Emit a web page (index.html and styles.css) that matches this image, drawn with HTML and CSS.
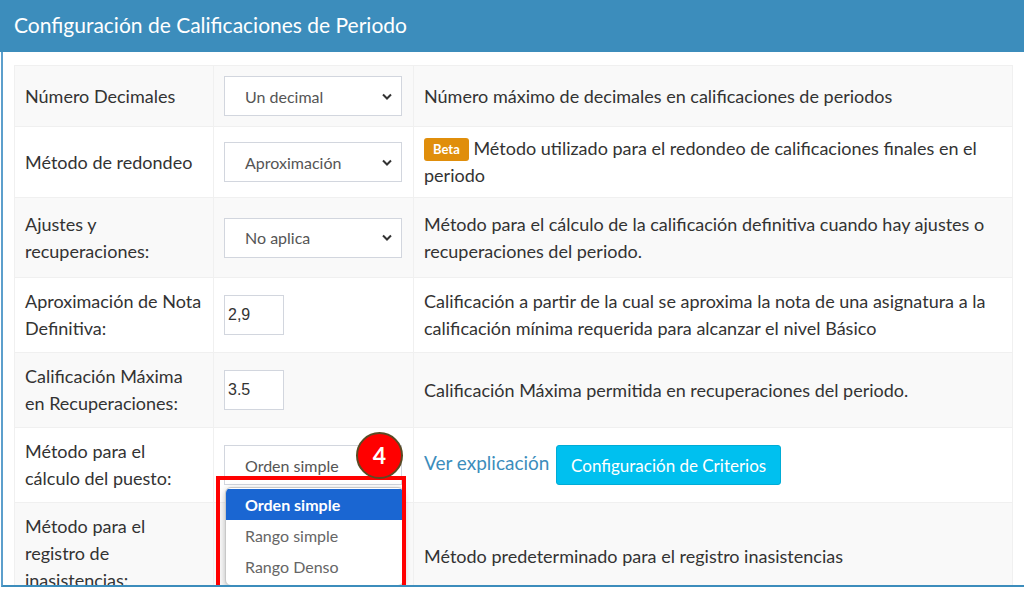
FILE: index.html
```html
<!DOCTYPE html>
<html lang="es">
<head>
  <meta charset="UTF-8">
  <title>Configuración de Calificaciones de Periodo</title>
  <link rel="stylesheet" href="styles.css">
</head>
<body>
  <div class="panel">
    <div class="panel-heading">Configuración de Calificaciones de Periodo</div>
    <div class="panel-body">
      <table class="config-table">
        <colgroup>
          <col class="col-label">
          <col class="col-field">
          <col class="col-desc">
        </colgroup>
        <tbody>
          <tr class="row-decimales">
            <td>Número Decimales</td>
            <td>
              <div class="fake-select">
                <span>Un decimal</span>
                <svg class="chevron" width="10" height="7" viewBox="0 0 10 7"><path d="M1 1.5 L5 5.5 L9 1.5" fill="none" stroke="#333" stroke-width="2"/></svg>
              </div>
            </td>
            <td>Número máximo de decimales en calificaciones de periodos</td>
          </tr>
          <tr class="row-redondeo">
            <td>Método de redondeo</td>
            <td>
              <div class="fake-select">
                <span>Aproximación</span>
                <svg class="chevron" width="10" height="7" viewBox="0 0 10 7"><path d="M1 1.5 L5 5.5 L9 1.5" fill="none" stroke="#333" stroke-width="2"/></svg>
              </div>
            </td>
            <td><span class="label-beta">Beta</span> Método utilizado para el redondeo de calificaciones finales en el periodo</td>
          </tr>
          <tr class="row-ajustes">
            <td>Ajustes y recuperaciones:</td>
            <td>
              <div class="fake-select">
                <span>No aplica</span>
                <svg class="chevron" width="10" height="7" viewBox="0 0 10 7"><path d="M1 1.5 L5 5.5 L9 1.5" fill="none" stroke="#333" stroke-width="2"/></svg>
              </div>
            </td>
            <td>Método para el cálculo de la calificación definitiva cuando hay ajustes o recuperaciones del periodo.</td>
          </tr>
          <tr class="row-aprox">
            <td>Aproximación de Nota Definitiva:</td>
            <td><input class="num-input" type="text" value="2,9"></td>
            <td>Calificación a partir de la cual se aproxima la nota de una asignatura a la calificación mínima requerida para alcanzar el nivel Básico</td>
          </tr>
          <tr class="row-maxima">
            <td>Calificación Máxima en Recuperaciones:</td>
            <td><input class="num-input" type="text" value="3.5"></td>
            <td>Calificación Máxima permitida en recuperaciones del periodo.</td>
          </tr>
          <tr class="row-puesto">
            <td>Método para el cálculo del puesto:</td>
            <td>
              <div class="select-wrap">
                <div class="fake-select">
                  <span>Orden simple</span>
                </div>
                <div class="marker">4</div>
                <div class="callout"></div>
                <ul class="dropdown">
                  <li class="selected">Orden simple</li>
                  <li>Rango simple</li>
                  <li>Rango Denso</li>
                </ul>
              </div>
            </td>
            <td class="actions">
              <a href="#" class="link">Ver explicación</a>
              <button class="btn-info">Configuración de Criterios</button>
            </td>
          </tr>
          <tr class="row-inasist">
            <td>Método para el registro de inasistencias:</td>
            <td></td>
            <td>Método predeterminado para el registro inasistencias</td>
          </tr>
        </tbody>
      </table>
    </div>
  </div>
</body>
</html>
```

FILE: styles.css
```css
html, body {
  margin: 0;
  height: 589px;
  overflow: hidden;
  background: #fff;
}

body {
  font-family: Lato, "Noto Sans", sans-serif;
  color: #333;
}

.panel {
  width: 1040px;
  height: 587px;
  border-left: 2px solid #5c9fcc;
  border-bottom: 2px solid #3c8dbc;
  box-sizing: border-box;
  margin-left: 1px;
  display: flex;
  flex-direction: column;
}

.panel-heading {
  background: #3c8dbc;
  color: #fff;
  font-size: 21px;
  height: 52px;
  line-height: 50px;
  padding-left: 14px;
  margin-left: -3px;
  box-sizing: border-box;
}

.panel-body {
  flex: 1;
  overflow: hidden;
  padding: 13px 0 0 11px;
}

.config-table {
  width: 998px;
  border-collapse: collapse;
  table-layout: fixed;
  font-size: 18px;
  line-height: 27px;
}

.col-label { width: 199px; }
.col-field { width: 200px; }
.col-desc { width: 599px; }

.config-table td {
  border: 1px solid #f0f0f0;
  padding: 0 10px;
  vertical-align: middle;
}

.config-table tr:nth-child(odd) td {
  background: #f9f9f9;
}

.row-decimales { height: 61px; }
.row-redondeo { height: 71px; }
.row-ajustes { height: 80px; }
.row-aprox, .row-maxima, .row-puesto { height: 75px; }
.row-inasist { height: 95px; }

.row-inasist td { vertical-align: top; padding-top: 10px; }
.row-inasist td:last-child { padding-top: 40px; }

.fake-select {
  width: 178px;
  height: 40px;
  box-sizing: border-box;
  border: 1px solid #d2d6de;
  background: #fff;
  display: flex;
  align-items: center;
  justify-content: space-between;
  padding: 0 9px 0 20px;
  font-size: 16px;
  color: #555;
}

.num-input {
  width: 60px;
  height: 40px;
  box-sizing: border-box;
  border: 1px solid #d2d6de;
  padding: 0 3px;
  font-family: "Liberation Sans", Arial, sans-serif;
  font-size: 16px;
  color: #333;
}

.label-beta {
  display: inline-block;
  background: #e08e0b;
  color: #fff;
  font-size: 13px;
  font-weight: bold;
  line-height: 17px;
  padding: 3px 9px;
  border-radius: 3px;
  vertical-align: 1px;
}

.select-wrap {
  position: relative;
}

.marker {
  position: absolute;
  left: 132px;
  top: -13px;
  width: 47px;
  height: 47px;
  box-sizing: border-box;
  border-radius: 50%;
  background: #ff0000;
  border: 2px solid #5a4a24;
  color: #fff;
  font-size: 23px;
  font-weight: bold;
  text-align: center;
  line-height: 42px;
  z-index: 3;
}

.callout {
  position: absolute;
  left: -8px;
  top: 31px;
  width: 190px;
  height: 120px;
  box-sizing: border-box;
  border: 4px solid #ff0000;
  z-index: 2;
}

.dropdown {
  position: absolute;
  left: 1px;
  top: 42px;
  width: 177px;
  margin: 0;
  padding: 1px 0 3px;
  list-style: none;
  background: #fff;
  border: 1px solid #c8c8c8;
  border-radius: 6px;
  box-shadow: 0 2px 6px rgba(0, 0, 0, 0.25);
  font-size: 16px;
  line-height: 31px;
  color: #666;
  z-index: 1;
  overflow: hidden;
}

.dropdown li {
  height: 31px;
  padding-left: 19px;
}

.dropdown li.selected {
  background: #1a66d2;
  color: #fff;
  font-weight: bold;
}

.actions {
  white-space: nowrap;
}

.link {
  color: #3c8dbc;
  text-decoration: none;
  font-size: 19px;
  vertical-align: 2px;
}

.btn-info {
  margin-left: 2px;
  height: 40px;
  padding: 0 14px;
  background: #00c0ef;
  border: 1px solid #00acd6;
  border-radius: 3px;
  color: #fff;
  font-family: Lato, "Noto Sans", sans-serif;
  font-size: 17px;
}
```
